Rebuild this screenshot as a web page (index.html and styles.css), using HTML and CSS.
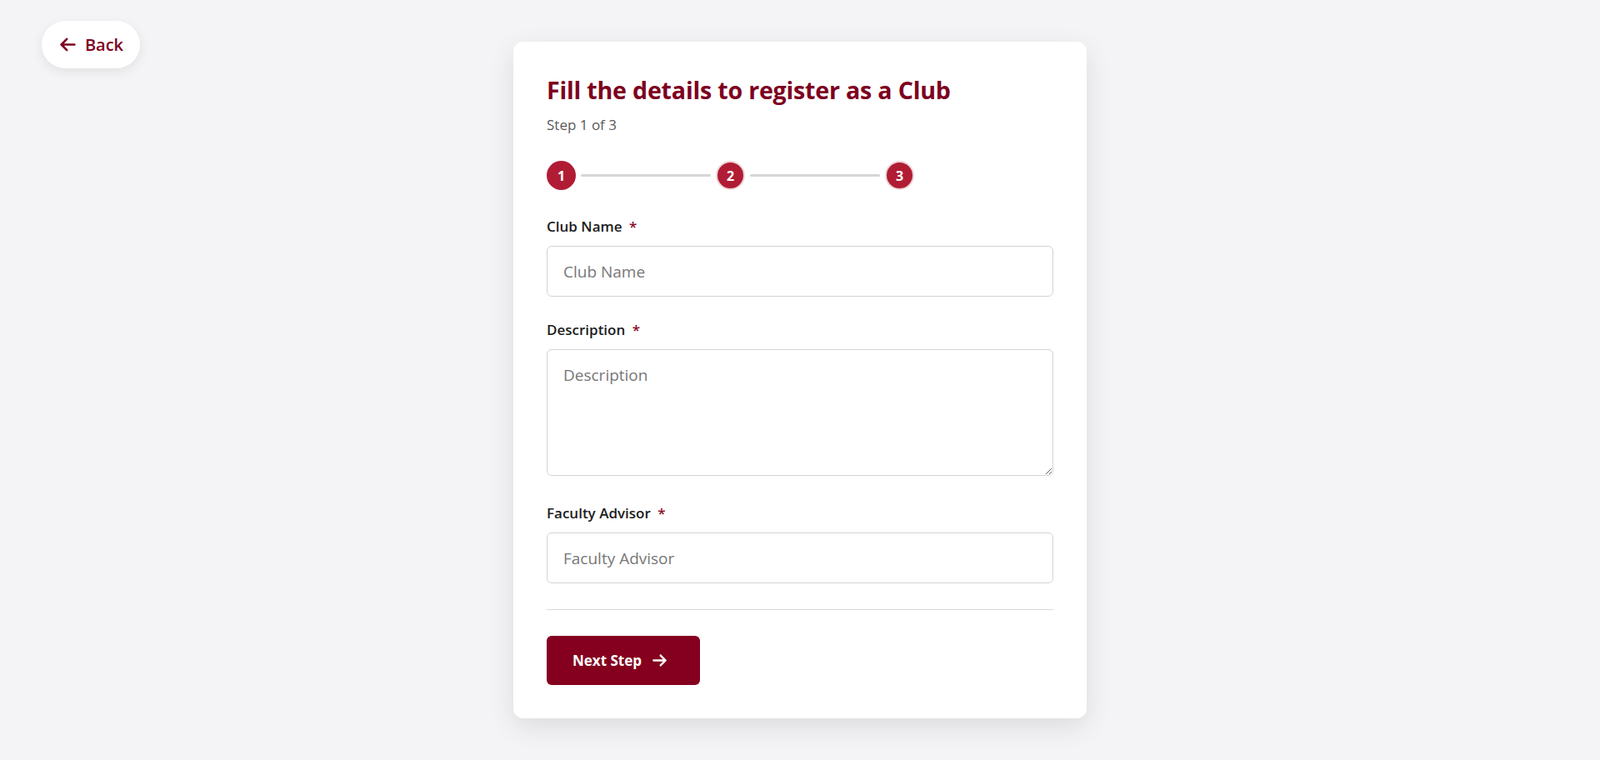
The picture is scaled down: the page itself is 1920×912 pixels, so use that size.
FILE: index.html
```html
<!DOCTYPE html>
<html lang="en">
<head>
<meta charset="utf-8">
<title>Register a Club</title>
<link rel="stylesheet" href="styles.css">
</head>
<body>
<div class="page">
  <div class="side">
    <button class="back" type="button">
      <svg class="back-icon" viewBox="0 0 448 512" aria-hidden="true"><path d="M9.4 233.4c-12.5 12.5-12.5 32.8 0 45.3l160 160c12.5 12.5 32.8 12.5 45.3 0s12.5-32.8 0-45.3L109.2 288 416 288c17.7 0 32-14.3 32-32s-14.3-32-32-32l-306.7 0L214.6 118.6c12.5-12.5 12.5-32.8 0-45.3s-32.8-12.5-45.3 0l-160 160z"/></svg>
      <span>Back</span>
    </button>
  </div>
  <main class="card">
    <h1 class="title">Fill the details to register as a Club</h1>
    <p class="subtitle">Step 1 of 3</p>
    <div class="steps">
      <span class="step">1</span>
      <span class="step-line"></span>
      <span class="step pending">2</span>
      <span class="step-line"></span>
      <span class="step pending">3</span>
    </div>
    <form class="form">
      <div class="field">
        <label class="label">Club Name <span class="req">*</span></label>
        <input class="input" type="text" placeholder="Club Name">
      </div>
      <div class="field">
        <label class="label">Description <span class="req">*</span></label>
        <textarea class="input textarea" placeholder="Description"></textarea>
      </div>
      <div class="field field-after-textarea">
        <label class="label">Faculty Advisor <span class="req">*</span></label>
        <input class="input" type="text" placeholder="Faculty Advisor">
      </div>
      <hr class="divider">
      <button class="next" type="button">
        <span>Next Step</span>
        <svg class="next-icon" viewBox="0 0 448 512" aria-hidden="true"><path d="M438.6 278.6c12.5-12.5 12.5-32.8 0-45.3l-160-160c-12.5-12.5-32.8-12.5-45.3 0s-12.5 32.8 0 45.3L338.8 224 32 224c-17.7 0-32 14.3-32 32s14.3 32 32 32l306.7 0L233.4 393.4c-12.5 12.5-12.5 32.8 0 45.3s32.8 12.5 45.3 0l160-160z"/></svg>
      </button>
    </form>
  </main>
  <div class="side"></div>
</div>
</body>
</html>
```
FILE: styles.css
```css
* { box-sizing: border-box; }

html, body {
  margin: 0;
  padding: 0;
  background: #f4f4f6;
  font-family: "Open Sans", "Noto Sans", "Liberation Sans", sans-serif;
  color: #1f1f1f;
}

.page {
  display: grid;
  grid-template-columns: 1fr 688px 1fr;
  min-height: 912px;
}

.side {
  display: flex;
  align-items: flex-start;
}

.back {
  margin: 25px 0 0 50px;
  height: 57px;
  width: 118px;
  border: none;
  border-radius: 999px;
  background: #ffffff;
  box-shadow: 0 4px 14px rgba(0, 0, 0, 0.08);
  display: flex;
  align-items: center;
  justify-content: center;
  gap: 11px;
  color: #7d0020;
  font-family: inherit;
  font-size: 20px;
  font-weight: 600;
  cursor: pointer;
  padding: 0 0 0 2px;
}

.back-icon {
  width: 19px;
  height: 21px;
  fill: #7d0020;
}

.card {
  margin-top: 50px;
  align-self: start;
  background: #ffffff;
  border-radius: 12px;
  box-shadow: 0 10px 32px rgba(0, 0, 0, 0.10);
  padding: 40px 40px 40px;
}

.title {
  margin: 0;
  font-size: 28.6px;
  line-height: 36px;
  font-weight: 700;
  color: #7d0020;
  letter-spacing: -0.2px;
}

.subtitle {
  margin: 12px 0 0;
  font-size: 17px;
  line-height: 24px;
  color: #595959;
}

.steps {
  margin-top: 31px;
  width: 441px;
  display: flex;
  align-items: center;
  gap: 6px;
}

.step {
  flex: none;
  width: 35px;
  height: 35px;
  border-radius: 50%;
  background: #b11c35;
  color: #ffffff;
  font-size: 16px;
  font-weight: 700;
  display: flex;
  align-items: center;
  justify-content: center;
}

.step.pending {
  border: 2px solid #edd5d8;
}

.step-line {
  flex: 1;
  height: 3px;
  background: #d6d6d6;
  border-radius: 2px;
}

.form {
  margin-top: 32px;
}

.field + .field {
  margin-top: 28px;
}

.field-after-textarea {
  margin-top: 33px !important;
}

.label {
  display: block;
  font-size: 17px;
  line-height: 24px;
  font-weight: 600;
  color: #1c1c1c;
  margin-bottom: 11px;
}

.req {
  color: #8a0a25;
  margin-left: 4px;
}

.input {
  display: block;
  width: 100%;
  height: 61px;
  border: 1px solid #d3d3d6;
  border-radius: 6px;
  padding: 0 19px;
  font-family: inherit;
  font-size: 19px;
  color: #1f1f1f;
  background: #ffffff;
  outline: none;
}

.input::placeholder {
  color: #777777;
}

.textarea {
  height: 152px;
  padding: 15px 19px;
  line-height: 30px;
  resize: vertical;
}

.divider {
  margin: 31px 0 0;
  border: none;
  border-top: 1px solid #d9d9d9;
}

.next {
  margin-top: 31px;
  width: 184px;
  height: 59px;
  border: none;
  border-radius: 6px;
  background: #84001e;
  color: #ffffff;
  font-family: inherit;
  font-size: 17px;
  font-weight: 700;
  display: flex;
  align-items: center;
  justify-content: flex-start;
  gap: 13px;
  padding: 0 0 0 31px;
  cursor: pointer;
}

.next-icon {
  width: 17px;
  height: 19px;
  fill: #ffffff;
}
```
